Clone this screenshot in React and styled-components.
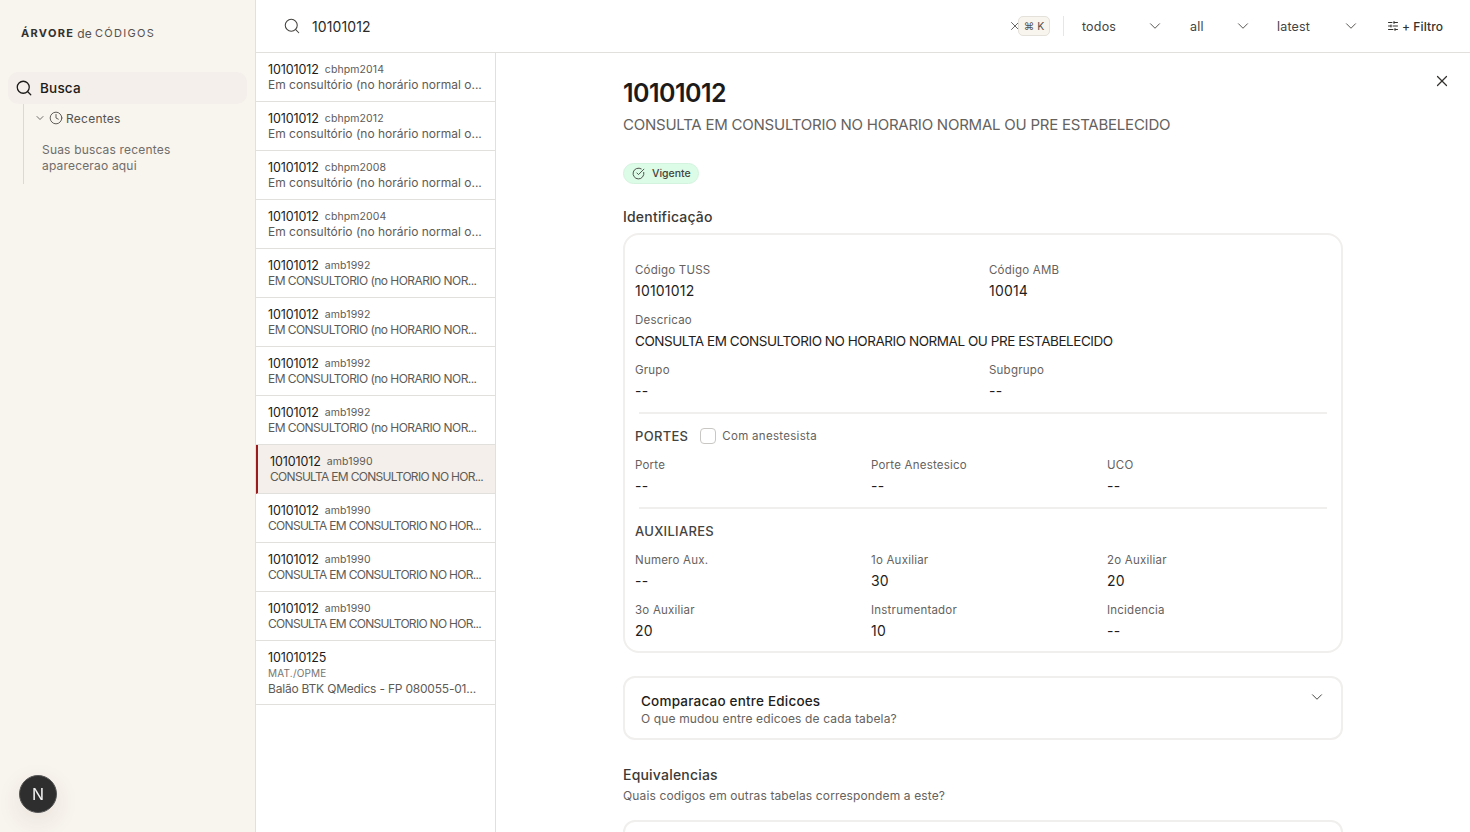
import React from "react";
import styled, { createGlobalStyle } from "styled-components";
import { Search, Clock, ChevronDown, X, SlidersHorizontal, CircleCheckBig } from "lucide-react";

const GlobalStyle = createGlobalStyle`
  * { box-sizing: border-box; }
  html, body { margin: 0; height: 100%; overflow: hidden; }
  body {
    font-family: Inter, "Noto Sans", "Liberation Sans", sans-serif;
    color: #1c1b1a;
    background: #fff;
  }
`;

const Shell = styled.div`
  display: flex;
  height: 832px;
  overflow: hidden;
`;

const Sidebar = styled.aside`
  width: 256px;
  flex: none;
  background: #f8f4ee;
  border-right: 1px solid #e2e0dd;
  padding: 26px 8px 0;
`;

const Logo = styled.div`
  display: flex;
  align-items: center;
  height: 14px;
  margin: 0 0 32px 13px;
  font-size: 11px;
  letter-spacing: 1.3px;
  color: #55524e;
  white-space: nowrap;
`;

const LogoStrong = styled.span`
  font-weight: 700;
  color: #33312e;
`;

const LogoSmall = styled.span`
  letter-spacing: 0.2px;
  margin: 0 3px 0 3px;
  font-size: 12px;
`;

const NavItem = styled.div`
  display: flex;
  align-items: center;
  gap: 7px;
  height: 32px;
  width: 239px;
  padding-left: 7px;
  border-radius: 10px;
  background: #f4efea;
  font-size: 13.5px;
  font-weight: 500;
  letter-spacing: 0.2px;
`;

const Tree = styled.div`
  margin-left: 15px;
  height: 80px;
  border-left: 1px solid #dcd9d4;
  padding-left: 10px;
`;

const TreeHead = styled.div`
  display: flex;
  align-items: center;
  height: 28px;
  gap: 3px;
  font-size: 12px;
  color: #56534f;
  letter-spacing: 0.25px;
  svg { color: #56534f; }
`;

const TreeHint = styled.p`
  margin: 10px 0 0 8px;
  font-size: 12px;
  line-height: 16px;
  letter-spacing: 0.18px;
  color: #706d69;
`;

const DevBadge = styled.div`
  position: fixed;
  left: 19px;
  top: 775px;
  width: 38px;
  height: 38px;
  border-radius: 50%;
  background: #2e2e2e;
  border: 1px solid #555;
  box-shadow: 0 8px 24px rgba(90, 60, 40, 0.1);
  color: #f2f2f2;
  display: flex;
  align-items: center;
  justify-content: center;
  font-size: 16px;
`;

const Main = styled.div`
  flex: 1;
  min-width: 0;
  display: flex;
  flex-direction: column;
`;

const TopBar = styled.header`
  height: 53px;
  flex: none;
  display: flex;
  align-items: center;
  padding: 0 27px;
  border-bottom: 1px solid #e2e0dd;
`;

const SearchText = styled.div`
  flex: 1;
  margin-left: 11px;
  font-size: 14px;
  letter-spacing: 0.1px;
  color: #2b2a28;
`;

const ClearIcon = styled(X)`
  color: #55524e;
  margin-right: -4px;
`;

const Kbd = styled.kbd`
  width: 32px;
  height: 20px;
  display: flex;
  align-items: center;
  justify-content: center;
  gap: 3px;
  font-family: inherit;
  font-size: 10.5px;
  color: #55524e;
  background: #f8f4ee;
  border: 1px solid #e4e0da;
  border-radius: 5px;
`;

const VDivider = styled.div`
  width: 1px;
  height: 20px;
  margin: 0 18px 0 13px;
  background: #e8e6e3;
`;

const Select = styled.div`
  width: ${(p) => p.$w}px;
  display: flex;
  align-items: center;
  justify-content: space-between;
  padding-right: ${(p) => p.$pad}px;
  font-size: 12.5px;
  letter-spacing: 0.2px;
  color: #45433f;
  svg { color: #55524e; }
`;

const FilterBtn = styled.div`
  display: flex;
  align-items: center;
  gap: 3px;
  font-size: 12px;
  font-weight: 500;
  letter-spacing: 0.1px;
  color: #33312e;
`;

const Body = styled.div`
  flex: 1;
  display: flex;
  min-height: 0;
`;

const ResultList = styled.div`
  width: 240px;
  flex: none;
  border-right: 1px solid #e2e0dd;
`;

const Row = styled.div`
  height: ${(p) => (p.$tall ? 64 : 49)}px;
  padding: 9px 12px 0;
  border-bottom: 1px solid #e2e0dd;
  border-left: ${(p) => (p.$active ? "2px solid #9b1c1c" : "none")};
  background: ${(p) => (p.$active ? "#f4efea" : "#fff")};
`;

const RowHead = styled.div`
  display: flex;
  align-items: center;
  gap: 6px;
  height: 15px;
  line-height: 15px;
`;

const RowCode = styled.span`
  font-size: 12.5px;
  letter-spacing: -0.1px;
  color: #1c1b1a;
`;

const RowTable = styled.span`
  font-size: 10.5px;
  letter-spacing: 0.1px;
  color: #5e5b57;
`;

const RowKind = styled.div`
  font-size: 10px;
  line-height: 16px;
  letter-spacing: 0.2px;
  color: #77746f;
`;

const RowDesc = styled.div`
  font-size: 12px;
  line-height: 16px;
  letter-spacing: ${(p) => p.$sp}px;
  color: #5e5b57;
  white-space: nowrap;
`;

const Detail = styled.main`
  position: relative;
  flex: 1;
  min-width: 0;
  overflow: hidden;
  padding: 25px 127px 0;
`;

const CloseBtn = styled(X)`
  position: absolute;
  top: 19px;
  right: 19px;
  color: #33312e;
`;

const Title = styled.h1`
  margin: 0;
  font-size: 25px;
  line-height: 30px;
  font-weight: 600;
  letter-spacing: -0.55px;
  color: #1c1b1a;
`;

const Subtitle = styled.p`
  margin: 5px 0 0;
  font-size: 15px;
  line-height: 24px;
  letter-spacing: -0.23px;
  color: #65625e;
`;

const Badge = styled.div`
  display: inline-flex;
  align-items: center;
  gap: 7px;
  height: 21px;
  margin-top: 26px;
  padding: 0 7px 0 8px;
  border-radius: 11px;
  background: #dcfce7;
  border: 1px solid #d3f3de;
  font-size: 10.5px;
  font-weight: 500;
  color: #45433f;
`;

const SectionTitle = styled.h2`
  margin: ${(p) => p.$top}px 0 0;
  font-size: 14px;
  line-height: 18px;
  font-weight: 500;
  letter-spacing: 0.2px;
  color: #3b3936;
`;

const Card = styled.section`
  margin-top: 7px;
  padding: 25px 10px 0;
  height: 420px;
  border: 2px solid #f0efed;
  border-radius: 16px;
`;

const FieldGrid = styled.div`
  display: grid;
  grid-template-columns: repeat(${(p) => p.$cols}, 1fr);
  column-gap: 12px;
`;

const Field = styled.div`
  height: 50px;
  grid-column: ${(p) => (p.$full ? "1 / -1" : "auto")};
`;

const FieldLabel = styled.div`
  font-size: 11.5px;
  line-height: 20px;
  letter-spacing: 0.22px;
  color: #65625e;
`;

const FieldValue = styled.div`
  margin-top: 1px;
  font-size: ${(p) => p.$size || 14}px;
  line-height: 20px;
  letter-spacing: ${(p) => p.$sp ?? 0.2}px;
  color: #1f1e1c;
`;

const Divider = styled.hr`
  margin: ${(p) => p.$top}px 4px 0;
  border: 0;
  border-top: 2px solid #f0efed;
`;

const GroupHead = styled.div`
  display: flex;
  align-items: center;
  gap: 12px;
  height: 18px;
  margin: 13px 0 10px;
`;

const GroupName = styled.span`
  font-size: 13px;
  font-weight: 500;
  letter-spacing: 0.3px;
  color: #45433f;
`;

const CheckLabel = styled.label`
  display: flex;
  align-items: center;
  gap: 6px;
  font-size: 11.5px;
  letter-spacing: 0.3px;
  color: #65625e;
`;

const CheckBox = styled.span`
  width: 16px;
  height: 16px;
  border: 1px solid #c9c7c4;
  border-radius: 4px;
`;

const Accordion = styled.div`
  display: flex;
  justify-content: space-between;
  height: 64px;
  margin-top: 23px;
  padding: 14px 15px 0 16px;
  border: 2px solid #f0efed;
  border-radius: 12px;
`;

const AccChevron = styled(ChevronDown)`
  margin-top: -4px;
  color: #45433f;
`;

const AccTitle = styled.div`
  font-size: 13.5px;
  line-height: 18px;
  font-weight: 500;
  letter-spacing: 0.2px;
  color: #1f1e1c;
`;

const Hint = styled.div`
  margin-top: ${(p) => p.$top}px;
  font-size: 12px;
  line-height: 16px;
  letter-spacing: 0.13px;
  color: #65625e;
`;

const NextCard = styled.div`
  height: 100px;
  margin-top: 16px;
  border: 2px solid #f0efed;
  border-radius: 12px;
`;

const lower = "Em consultório (no horário normal o...";
const older = "EM CONSULTORIO (no HORARIO NOR...";
const oldest = "CONSULTA EM CONSULTORIO NO HOR...";

const results = [
  { table: "cbhpm2014", desc: lower, sp: 0 },
  { table: "cbhpm2012", desc: lower, sp: 0 },
  { table: "cbhpm2008", desc: lower, sp: 0 },
  { table: "cbhpm2004", desc: lower, sp: 0 },
  { table: "amb1992", desc: older, sp: -0.55 },
  { table: "amb1992", desc: older, sp: -0.55 },
  { table: "amb1992", desc: older, sp: -0.55 },
  { table: "amb1992", desc: older, sp: -0.55 },
  { table: "amb1990", desc: oldest, sp: -0.7, active: true },
  { table: "amb1990", desc: oldest, sp: -0.7 },
  { table: "amb1990", desc: oldest, sp: -0.7 },
  { table: "amb1990", desc: oldest, sp: -0.7 },
];

const chevron = <ChevronDown size={18} strokeWidth={1.3} />;

export default function App() {
  return (
    <Shell>
      <GlobalStyle />
      <Sidebar>
        <Logo>
          <LogoStrong>ÁRVORE</LogoStrong>
          <LogoSmall>de</LogoSmall>
          CÓDIGOS
        </Logo>
        <NavItem>
          <Search size={18} strokeWidth={1.7} />
          Busca
        </NavItem>
        <Tree>
          <TreeHead>
            <ChevronDown size={12} strokeWidth={1.7} />
            <Clock size={14} strokeWidth={1.6} />
            Recentes
          </TreeHead>
          <TreeHint>
            Suas buscas recentes
            <br />
            aparecerao aqui
          </TreeHint>
        </Tree>
      </Sidebar>

      <Main>
        <TopBar>
          <Search size={18} strokeWidth={1.4} color="#45433f" />
          <SearchText>10101012</SearchText>
          <ClearIcon size={14} strokeWidth={1.5} />
          <Kbd>⌘ K</Kbd>
          <VDivider />
          <Select $w={108} $pad={26}>
            todos
            {chevron}
          </Select>
          <Select $w={87} $pad={25}>
            all
            {chevron}
          </Select>
          <Select $w={110} $pad={27}>
            latest
            {chevron}
          </Select>
          <FilterBtn>
            <SlidersHorizontal size={12} />+ Filtro
          </FilterBtn>
        </TopBar>

        <Body>
          <ResultList>
            {results.map((r, i) => (
              <Row key={i} $active={r.active}>
                <RowHead>
                  <RowCode>10101012</RowCode>
                  <RowTable>{r.table}</RowTable>
                </RowHead>
                <RowDesc $sp={r.sp}>{r.desc}</RowDesc>
              </Row>
            ))}
            <Row $tall>
              <RowHead>
                <RowCode>101010125</RowCode>
              </RowHead>
              <RowKind>MAT./OPME</RowKind>
              <RowDesc $sp={-0.2}>Balão BTK QMedics - FP 080055-01...</RowDesc>
            </Row>
          </ResultList>

          <Detail>
            <CloseBtn size={18} strokeWidth={1.6} />
            <Title>10101012</Title>
            <Subtitle>CONSULTA EM CONSULTORIO NO HORARIO NORMAL OU PRE ESTABELECIDO</Subtitle>
            <Badge>
              <CircleCheckBig size={13} strokeWidth={1.7} />
              Vigente
            </Badge>
            <SectionTitle $top={24}>Identificação</SectionTitle>
            <Card>
              <FieldGrid $cols={2}>
                <Field>
                  <FieldLabel>Código TUSS</FieldLabel>
                  <FieldValue>10101012</FieldValue>
                </Field>
                <Field>
                  <FieldLabel>Código AMB</FieldLabel>
                  <FieldValue>10014</FieldValue>
                </Field>
                <Field $full>
                  <FieldLabel>Descricao</FieldLabel>
                  <FieldValue $size={13.5} $sp={-0.45}>
                    CONSULTA EM CONSULTORIO NO HORARIO NORMAL OU PRE ESTABELECIDO
                  </FieldValue>
                </Field>
                <Field>
                  <FieldLabel>Grupo</FieldLabel>
                  <FieldValue>--</FieldValue>
                </Field>
                <Field>
                  <FieldLabel>Subgrupo</FieldLabel>
                  <FieldValue>--</FieldValue>
                </Field>
              </FieldGrid>
              <Divider $top={2} />
              <GroupHead>
                <GroupName>PORTES</GroupName>
                <CheckLabel>
                  <CheckBox />
                  Com anestesista
                </CheckLabel>
              </GroupHead>
              <FieldGrid $cols={3}>
                <Field>
                  <FieldLabel>Porte</FieldLabel>
                  <FieldValue>--</FieldValue>
                </Field>
                <Field>
                  <FieldLabel>Porte Anestesico</FieldLabel>
                  <FieldValue>--</FieldValue>
                </Field>
                <Field>
                  <FieldLabel>UCO</FieldLabel>
                  <FieldValue>--</FieldValue>
                </Field>
              </FieldGrid>
              <Divider $top={2} />
              <GroupHead>
                <GroupName>AUXILIARES</GroupName>
              </GroupHead>
              <FieldGrid $cols={3}>
                <Field>
                  <FieldLabel>Numero Aux.</FieldLabel>
                  <FieldValue>--</FieldValue>
                </Field>
                <Field>
                  <FieldLabel>1o Auxiliar</FieldLabel>
                  <FieldValue>30</FieldValue>
                </Field>
                <Field>
                  <FieldLabel>2o Auxiliar</FieldLabel>
                  <FieldValue>20</FieldValue>
                </Field>
                <Field>
                  <FieldLabel>3o Auxiliar</FieldLabel>
                  <FieldValue>20</FieldValue>
                </Field>
                <Field>
                  <FieldLabel>Instrumentador</FieldLabel>
                  <FieldValue>10</FieldValue>
                </Field>
                <Field>
                  <FieldLabel>Incidencia</FieldLabel>
                  <FieldValue>--</FieldValue>
                </Field>
              </FieldGrid>
            </Card>
            <Accordion>
              <div>
                <AccTitle>Comparacao entre Edicoes</AccTitle>
                <Hint $top={1}>O que mudou entre edicoes de cada tabela?</Hint>
              </div>
              <AccChevron size={18} strokeWidth={1.3} />
            </Accordion>
            <SectionTitle $top={26}>Equivalencias</SectionTitle>
            <Hint $top={4}>Quais codigos em outras tabelas correspondem a este?</Hint>
            <NextCard />
          </Detail>
        </Body>
      </Main>
      <DevBadge>N</DevBadge>
    </Shell>
  );
}
